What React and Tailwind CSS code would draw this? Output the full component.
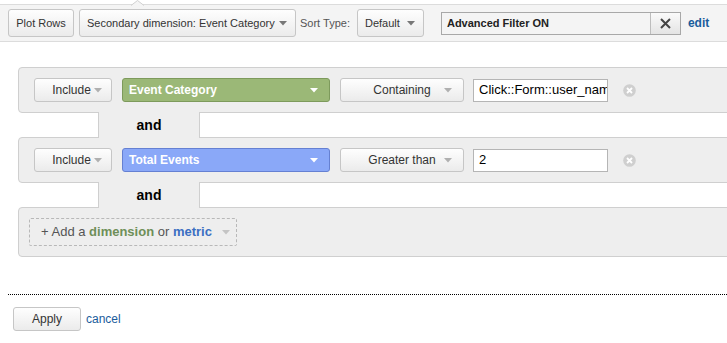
import React from "react";

const Arrow = ({ color = "#999", className = "" }) => (
  <svg width="8" height="5" viewBox="0 0 8 5" className={className}>
    <path d="M0 0 L8 0 L4 4.5 Z" fill={color} />
  </svg>
);

const btn =
  "border border-[#c6c6c6] rounded-[3px] bg-gradient-to-b from-[#fefefe] to-[#ebebeb] text-[#333]";

function FilterRow({ label, color, border, op, value }) {
  return (
    <div className="h-[46px] border border-[#cfcfcf] rounded-l-[4px] bg-[#eeeeee] flex items-center pl-[15px]">
      <div className={`${btn} relative w-[78px] h-[24px] flex items-center justify-center text-[12px]`}>
        <span className="pr-[3px]">Include</span>
        <Arrow color="#b0b0b0" className="absolute right-[9px] top-[9px]" />
      </div>
      <div
        className={`ml-[10px] w-[208px] h-[24px] rounded-[3px] border ${border} ${color} flex items-center pl-[6px] pr-[11px] text-white font-bold text-[12px]`}
      >
        <span className="flex-1">{label}</span>
        <Arrow color="#ffffff" />
      </div>
      <div className={`${btn} relative ml-[10px] w-[124px] h-[24px] flex items-center justify-center text-[12px]`}>
        <span>{op}</span>
        <Arrow color="#b0b0b0" className="absolute right-[11px] top-[9px]" />
      </div>
      <div className="ml-[9px] w-[135px] h-[23px] border border-[#b5b5b5] bg-white flex items-center pl-[5px] text-[13px] text-black overflow-hidden whitespace-nowrap">
        {value}
      </div>
      <svg width="13" height="13" viewBox="0 0 13 13" className="ml-[15px]">
        <circle cx="6.5" cy="6.5" r="6.3" fill="#cfcfcf" />
        <path d="M4 4 L9 9 M9 4 L4 9" stroke="#ffffff" strokeWidth="1.8" />
      </svg>
    </div>
  );
}

function Connector() {
  return (
    <div className="flex h-[24px]">
      <div className="w-[81px] border-r border-[#cfcfcf] bg-white" />
      <div className="w-[100px] -my-px relative z-10 bg-[#eeeeee] flex items-center justify-center font-bold text-[14px] text-black">
        and
      </div>
      <div className="flex-1 border-l border-[#cfcfcf] bg-white" />
    </div>
  );
}

export default function App() {
  return (
    <div className="w-[727px] h-[343px] bg-white overflow-hidden font-['Liberation_Sans',Arial,sans-serif] text-[#333]">
      {/* toolbar */}
      <div className="relative mt-[4px] h-[38px] border-t border-b border-[#dcdcdc] bg-[#f4f4f4] flex items-center pl-[8px] text-[11px]">
        <svg width="13" height="6" viewBox="0 0 13 6" className="absolute left-[131px] top-[-5px]">
          <path d="M0 5.5 L6.5 0.5 L13 5.5" fill="#f4f4f4" stroke="#d0d0d0" strokeWidth="1" />
        </svg>
        <div className={`${btn} w-[66px] h-[28px] flex items-center justify-center`}>Plot Rows</div>
        <div className={`${btn} ml-[5px] w-[217px] h-[28px] flex items-center pl-[7px] pr-[8px]`}>
          <span className="flex-1">Secondary dimension: Event Category</span>
          <Arrow color="#777" />
        </div>
        <span className="ml-[4px] text-[#555]">Sort Type:</span>
        <div className={`${btn} ml-[7px] w-[67px] h-[28px] flex items-center pl-[7px] pr-[8px]`}>
          <span className="flex-1">Default</span>
          <Arrow color="#777" />
        </div>
        <div className="ml-[17px] w-[240px] h-[23px] border border-[#a8a8a8] bg-[#f4f4f4] flex">
          <div className="flex-1 flex items-center pl-[5px] font-bold text-[#222]">Advanced Filter ON</div>
          <div className="w-[30px] border-l border-[#bdbdbd] bg-gradient-to-b from-[#fafafa] to-[#e4e4e4] flex items-center justify-center">
            <svg width="11" height="11" viewBox="0 0 11 11">
              <path d="M1 1 L10 10 M10 1 L1 10" stroke="#444" strokeWidth="2" />
            </svg>
          </div>
        </div>
        <span className="ml-[7px] font-bold text-[12px] text-[#1a5c9c]">edit</span>
      </div>

      {/* filter panel */}
      <div className="mt-[25px] ml-[18px] w-[730px] flex flex-col">
        <FilterRow
          label="Event Category"
          color="bg-[#9bb877]"
          border="border-[#7d9a5c]"
          op="Containing"
          value="Click::Form::user_name"
        />
        <Connector />
        <FilterRow
          label="Total Events"
          color="bg-[#8aa8f8]"
          border="border-[#6580d2]"
          op="Greater than"
          value="2"
        />
        <Connector />
        <div className="h-[50px] border border-[#cfcfcf] rounded-l-[4px] bg-[#eeeeee] flex items-center pl-[10px]">
          <div className="w-[208px] h-[28px] border border-dashed border-[#b8b8b8] rounded-[2px] flex items-center pl-[11px] text-[13px] text-[#555]">
            <span>+ Add a&nbsp;</span>
            <span className="font-bold text-[#6e8f58]">dimension</span>
            <span>&nbsp;or&nbsp;</span>
            <span className="font-bold text-[#3b6fc2]">metric</span>
            <Arrow color="#c4c4c4" className="ml-[10px]" />
          </div>
        </div>
      </div>

      {/* footer */}
      <div className="mt-[37px] ml-[8px] border-t border-dotted border-black" />
      <div className="mt-[12px] ml-[13px] flex items-center text-[12px]">
        <div className={`${btn} w-[68px] h-[24px] flex items-center justify-center text-[#222]`}>Apply</div>
        <span className="ml-[5px] text-[#1a5c9c]">cancel</span>
      </div>
    </div>
  );
}
